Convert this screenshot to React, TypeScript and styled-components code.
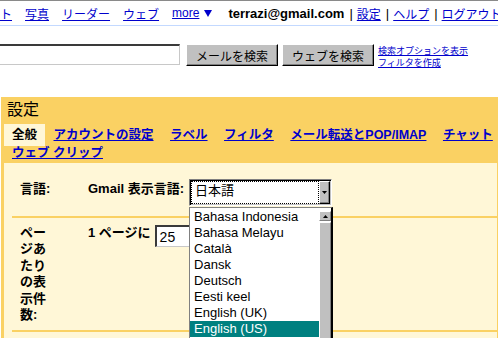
import React from "react";
import styled, { createGlobalStyle } from "styled-components";

const GlobalStyle = createGlobalStyle`
  html, body { margin: 0; padding: 0; background: #ffffff; overflow: hidden; }
  body { font-family: "Liberation Sans", "Noto Sans CJK JP", sans-serif; color: #000; }
  #root { width: 498px; height: 338px; overflow: hidden; }
`;

const Page = styled.div`
  width: 498px;
  height: 338px;
  overflow: hidden;
  display: flex;
  flex-direction: column;
`;

const TopNav = styled.div`
  flex-shrink: 0;
  height: 24px;
  border-top: 1px solid #8a8a8a;
  border-bottom: 1px solid #c3d9ff;
  display: flex;
  align-items: center;
  white-space: nowrap;
  font-size: 12px;
`;

const NavLinks = styled.div`
  display: flex;
  align-items: center;
  gap: 13px;
  margin-left: -60px;
`;

const NavLink = styled.a`
  color: #0000cc;
  text-decoration: underline;
  cursor: pointer;
`;

const More = styled.span`
  display: flex;
  align-items: center;
  gap: 5px;
`;

const Account = styled.div`
  display: flex;
  align-items: center;
  margin-left: 16px;
`;

const Email = styled.span`
  font-weight: bold;
  font-size: 13px;
`;

const Sep = styled.span`
  margin: 0 4px 0 5px;
  font-size: 13px;
`;

const SearchRow = styled.div`
  flex-shrink: 0;
  margin-top: 18px;
  height: 25px;
  display: flex;
  align-items: flex-start;
`;

const SearchInput = styled.div`
  box-sizing: border-box;
  width: 201px;
  height: 21px;
  margin-left: -21px;
  background: #ffffff;
  border-style: solid;
  border-width: 2px 1px 1px 2px;
  border-color: #3a3a3a #c8c8c8 #c8c8c8 #3a3a3a;
`;

const Button = styled.div<{ $ml: number }>`
  box-sizing: border-box;
  height: 22px;
  margin-left: ${(p) => p.$ml}px;
  padding: 0 9px;
  display: flex;
  align-items: center;
  font-size: 12px;
  color: #000;
  background: #c0c0c0;
  border: 1px solid;
  border-color: #ffffff #000000 #000000 #ffffff;
  box-shadow: inset -1px -1px 0 #808080;
  white-space: nowrap;
`;

const SearchLinks = styled.div`
  margin: 1px 0 0 4px;
  display: flex;
  flex-direction: column;
  font-size: 9px;
  line-height: 12px;
  white-space: nowrap;
`;

const SettingsBox = styled.div`
  flex: 1;
  margin: 28px 0 0 1px;
  padding: 3px 1px 0 3px;
  background: #fad163;
  display: flex;
  flex-direction: column;
`;

const Title = styled.div`
  margin-left: 3px;
  font-size: 16px;
  line-height: 20px;
`;

const Tabs = styled.div`
  margin-top: 4px;
  padding: 0 0 3px 8px;
  display: flex;
  flex-wrap: wrap;
  align-items: center;
  column-gap: 16.5px;
  font-size: 12.5px;
  font-weight: bold;
  white-space: nowrap;
`;

const ActiveTab = styled.span`
  margin: 0 -8px;
  padding: 4px 8px;
  line-height: 14px;
  background: #fff7d7;
  color: #000;
`;

const TabLink = styled.a`
  line-height: 14px;
  color: #0000cc;
  text-decoration: underline;
  cursor: pointer;
`;

const Inner = styled.div`
  flex: 1;
  background: #fff7d7;
  padding-left: 8px;
  display: flex;
  flex-direction: column;
`;

const SettingRow = styled.div<{ $pt: number; $pb: number }>`
  display: flex;
  align-items: flex-start;
  padding: ${(p) => p.$pt}px 0 ${(p) => p.$pb}px 8px;
  border-bottom: 2px solid #fad163;
`;

const Label = styled.div<{ $pt: number }>`
  flex-shrink: 0;
  width: 32px;
  margin-right: 36px;
  padding-top: ${(p) => p.$pt}px;
  font-size: 13px;
  font-weight: bold;
  line-height: 16.4px;
`;

const Field = styled.div`
  display: flex;
  align-items: flex-start;
`;

const Caption = styled.span<{ $pt: number }>`
  padding-top: ${(p) => p.$pt}px;
  font-size: 13px;
  font-weight: bold;
  line-height: 16.4px;
  white-space: nowrap;
`;

const SelectWrap = styled.div`
  position: relative;
  margin-left: 5px;
`;

const SelectBox = styled.div`
  box-sizing: border-box;
  width: 143px;
  height: 27px;
  padding: 1px;
  display: flex;
  background: #ffffff;
  border: 1px solid;
  border-color: #808080 #ffffff #ffffff #808080;
  box-shadow: inset 1px 1px 0 #000000, inset -1px -1px 0 #c0c0c0;
`;

const SelectValue = styled.div`
  flex: 1;
  padding: 1px 0 0 3px;
  border: 1px dotted #000;
  font-size: 13px;
  line-height: 16px;
`;

const ComboButton = styled.div`
  box-sizing: border-box;
  width: 11px;
  display: flex;
  align-items: center;
  justify-content: center;
  background: #c0c0c0;
  border: 1px solid;
  border-color: #ffffff #000000 #000000 #ffffff;
  box-shadow: inset -1px -1px 0 #808080;
`;

const DropList = styled.div`
  position: absolute;
  top: 28px;
  left: 0;
  box-sizing: border-box;
  width: 144px;
  height: 140px;
  display: flex;
  background: #ffffff;
  border-style: solid;
  border-width: 1px 2px 0 1px;
  border-color: #808080 #000000 #808080 #808080;
  z-index: 2;
`;

const Items = styled.div`
  flex: 1;
  padding-top: 1px;
  display: flex;
  flex-direction: column;
`;

const Item = styled.div<{ $selected?: boolean }>`
  height: 16px;
  line-height: 16px;
  padding-left: 4px;
  font-size: 13px;
  white-space: nowrap;
  background: ${(p) => (p.$selected ? "#008080" : "transparent")};
  color: ${(p) => (p.$selected ? "#ffffff" : "#000000")};
`;

const ScrollBar = styled.div`
  width: 12px;
  padding-top: 3px;
  display: flex;
  flex-direction: column;
`;

const ScrollUp = styled.div`
  box-sizing: border-box;
  height: 10px;
  display: flex;
  align-items: center;
  justify-content: center;
  background: #c0c0c0;
  border: 1px solid;
  border-color: #ffffff #808080 #808080 #ffffff;
`;

const Thumb = styled.div`
  flex: 1;
  margin-top: 1px;
  background: #c0c0c0;
  border-top: 1px solid #ffffff;
  border-left: 1px solid #ffffff;
  border-right: 1px solid #808080;
`;

const NumberBox = styled.div`
  box-sizing: border-box;
  width: 60px;
  height: 22px;
  margin-left: 4px;
  padding: 2px 0 0 3px;
  background: #ffffff;
  border-style: solid;
  border-width: 2px 1px 1px 2px;
  border-color: #3a3a3a #c8c8c8 #c8c8c8 #3a3a3a;
  font-size: 14px;
  line-height: 16px;
`;

const languages = [
  "Bahasa Indonesia",
  "Bahasa Melayu",
  "Català",
  "Dansk",
  "Deutsch",
  "Eesti keel",
  "English (UK)",
  "English (US)",
];

export default function App() {
  return (
    <Page>
      <GlobalStyle />
      <TopNav>
        <NavLinks>
          <NavLink>ドキュメント</NavLink>
          <NavLink>写真</NavLink>
          <NavLink>リーダー</NavLink>
          <NavLink>ウェブ</NavLink>
          <More>
            <NavLink>more</NavLink>
            <svg width="8" height="7" viewBox="0 0 8 7">
              <path d="M0 0H8L4 7Z" fill="#0000cc" />
            </svg>
          </More>
        </NavLinks>
        <Account>
          <Email>terrazi@gmail.com</Email>
          <Sep>|</Sep>
          <NavLink>設定</NavLink>
          <Sep>|</Sep>
          <NavLink>ヘルプ</NavLink>
          <Sep>|</Sep>
          <NavLink>ログアウト</NavLink>
        </Account>
      </TopNav>

      <SearchRow>
        <SearchInput />
        <Button $ml={6}>メールを検索</Button>
        <Button $ml={4}>ウェブを検索</Button>
        <SearchLinks>
          <NavLink>検索オプションを表示</NavLink>
          <NavLink>フィルタを作成</NavLink>
        </SearchLinks>
      </SearchRow>

      <SettingsBox>
        <Title>設定</Title>
        <Tabs>
          <ActiveTab>全般</ActiveTab>
          <TabLink>アカウントの設定</TabLink>
          <TabLink>ラベル</TabLink>
          <TabLink>フィルタ</TabLink>
          <TabLink>メール転送とPOP/IMAP</TabLink>
          <TabLink>チャット</TabLink>
          <TabLink>ウェブ クリップ</TabLink>
        </Tabs>
        <Inner>
          <SettingRow $pt={16} $pb={10}>
            <Label $pt={2}>言語:</Label>
            <Field>
              <Caption $pt={2}>Gmail 表示言語:</Caption>
              <SelectWrap>
                <SelectBox>
                  <SelectValue>日本語</SelectValue>
                  <ComboButton>
                    <svg width="5" height="4" viewBox="0 0 5 4">
                      <path d="M0 0H5L2.5 3Z" fill="#000" />
                    </svg>
                  </ComboButton>
                </SelectBox>
                <DropList>
                  <Items>
                    {languages.map((l) => (
                      <Item key={l} $selected={l === "English (US)"}>
                        {l}
                      </Item>
                    ))}
                  </Items>
                  <ScrollBar>
                    <ScrollUp>
                      <svg width="5" height="3" viewBox="0 0 5 3">
                        <path d="M0 3H5L2.5 0Z" fill="#000" />
                      </svg>
                    </ScrollUp>
                    <Thumb />
                  </ScrollBar>
                </DropList>
              </SelectWrap>
            </Field>
          </SettingRow>
          <SettingRow $pt={7} $pb={7}>
            <Label $pt={0}>ページあたりの表示件数:</Label>
            <Field>
              <Caption $pt={0}>1 ページに</Caption>
              <NumberBox>25</NumberBox>
            </Field>
          </SettingRow>
        </Inner>
      </SettingsBox>
    </Page>
  );
}
